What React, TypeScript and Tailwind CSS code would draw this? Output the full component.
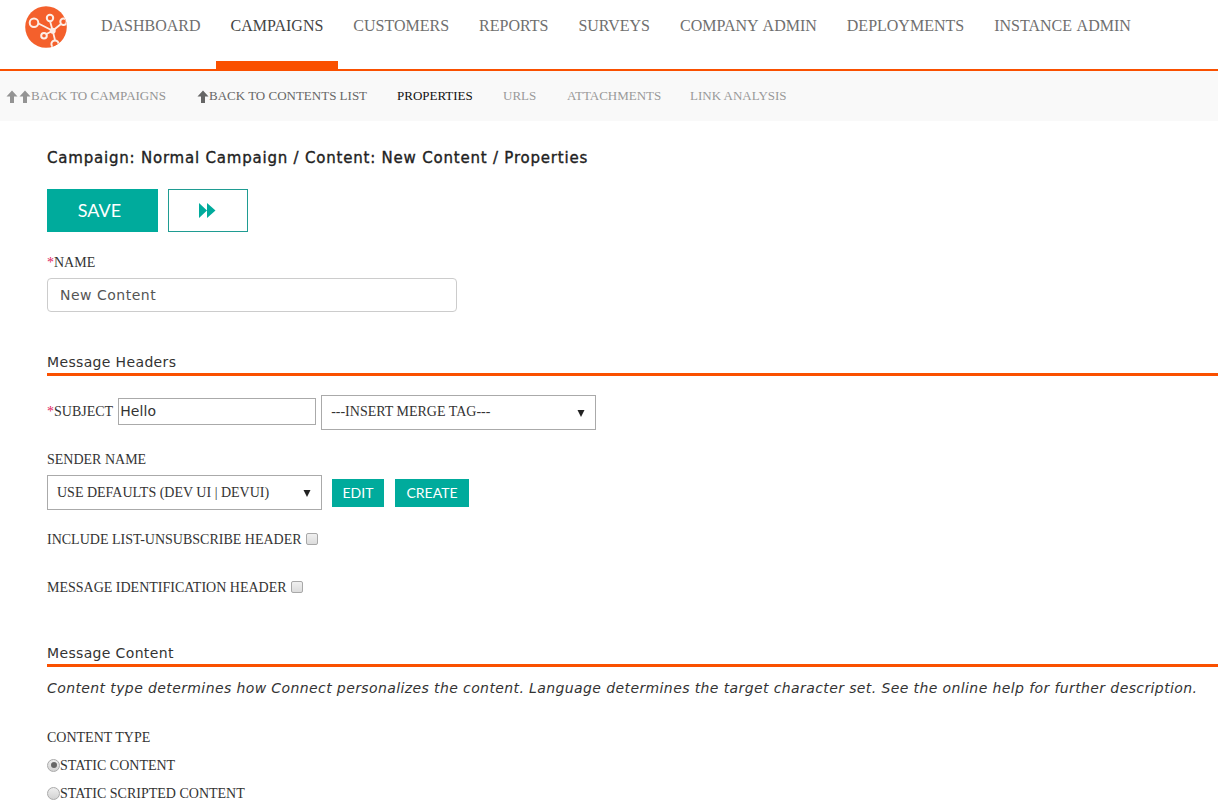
import React from "react";

const serif = "font-['Liberation_Serif',serif]";
const sans = "font-['DejaVu_Sans',sans-serif]";

function Logo() {
  return (
    <svg width="42" height="42" viewBox="0 0 42 42">
      <defs>
        <clipPath id="logo-clip"><circle cx="21" cy="21" r="20.8" /></clipPath>
      </defs>
      <circle cx="21" cy="21" r="20.8" fill="#f4602c" />
      <g clipPath="url(#logo-clip)" stroke="#fdeee6" strokeWidth="1.8" fill="none">
        <path d="M13.5 17.5 L27.7 24.7 M25 15 L27.7 24.7 M27.7 24.7 L36 18 M27.7 24.7 L21.5 28 M27.7 24.7 L30 34" />
        <circle cx="9" cy="16.7" r="4.3" fill="#f4602c" strokeWidth="2" />
        <circle cx="25" cy="12" r="3.2" fill="#f4602c" strokeWidth="2" />
        <circle cx="19" cy="29.7" r="2.8" fill="#f4602c" strokeWidth="2" />
        <circle cx="38.5" cy="15.7" r="3.2" fill="#f4602c" strokeWidth="2" />
        <circle cx="30" cy="38" r="3.6" fill="#f4602c" strokeWidth="2" />
      </g>
      <circle cx="27.7" cy="24.7" r="3" fill="#fdeee6" />
    </svg>
  );
}

function Up({ className = "" }: { className?: string }) {
  return (
    <svg width="12" height="13" viewBox="0 0 12 13" className={className} fill="currentColor">
      <path d="M6 0.5 L11.5 6.5 H8 V13 H4 V6.5 H0.5 Z" />
    </svg>
  );
}

function Heading({ children }: { children: React.ReactNode }) {
  return (
    <div className={`${sans} text-[14px] leading-[17px] tracking-[0.35px] text-[#333] border-b-[3px] border-[#fa5000] pb-[2px]`}>
      {children}
    </div>
  );
}

function FakeSelect({ text, w, extra = "" }: { text: string; w: string; extra?: string }) {
  return (
    <div className={`${w} h-[35px] border border-[#aaa] bg-white flex items-center justify-between pl-[9px] pr-[10px] text-[14px] text-[#333]`}>
      <span className={extra}>{text}</span>
      <svg width="8" height="8" viewBox="0 0 8 8" className="mt-[1px]" fill="#222"><path d="M0.5 1 H7.5 L4 8 Z" /></svg>
    </div>
  );
}

function Check() {
  return <span className="inline-block w-[12px] h-[12px] rounded-[2px] border border-[#a8a8a8] bg-gradient-to-b from-[#f0f0f0] to-[#dcdcdc] ml-[4px] mb-[4px] align-middle" />;
}

function Radio({ on }: { on?: boolean }) {
  return (
    <span className="w-[13px] h-[13px] -mt-[2px] rounded-full border border-[#aaa] bg-gradient-to-b from-[#eee] to-[#d2d2d2] flex items-center justify-center">
      {on && <span className="w-[6px] h-[6px] rounded-full bg-[#666]" />}
    </span>
  );
}

export default function App() {
  const nav = ["DASHBOARD", "CAMPAIGNS", "CUSTOMERS", "REPORTS", "SURVEYS", "COMPANY ADMIN", "DEPLOYMENTS", "INSTANCE ADMIN"];
  return (
    <div className={`${serif} w-[1218px] h-[801px] overflow-hidden bg-white text-[#333]`}>
      <header className="h-[71px] flex border-b-2 border-[#fa5000]">
        <div className="w-[86px] pl-[25px] pt-[6px] shrink-0"><Logo /></div>
        <nav className="flex [word-spacing:1.5px]">
          {nav.map((n) => (
            <div
              key={n}
              className={`px-[15px] pt-[16px] text-[16px] leading-[20px] ${n === "CAMPAIGNS" ? "text-[#444] border-b-[8px] border-[#fa5000] h-[69px] mb-[-2px] box-border" : "text-[#6f6f6f]"}`}
            >
              {n}
            </div>
          ))}
        </nav>
      </header>

      <div className="h-[50px] bg-[#f9f9f9] flex items-center text-[13px] pl-[6px]">
        <span className="flex items-center text-[#949494] w-[191px]"><Up /><Up className="ml-[1px]" />BACK TO CAMPAIGNS</span>
        <span className="flex items-center text-[#666] w-[200px]"><Up />BACK TO CONTENTS LIST</span>
        <span className="text-[#111] w-[106px]">PROPERTIES</span>
        <span className="text-[#999] w-[64px]">URLS</span>
        <span className="text-[#999] w-[123px]">ATTACHMENTS</span>
        <span className="text-[#999]">LINK ANALYSIS</span>
      </div>

      <main className="pl-[47px] pt-[28px]">
        <h1 className={`${sans} font-normal text-[15px] leading-[18px] text-[#222] tracking-[0.79px] [-webkit-text-stroke:0.35px_#222]`}>Campaign: Normal Campaign / Content: New Content / Properties</h1>

        <div className="flex gap-[10px] mt-[22px]">
          <div className={`font-['Lato',sans-serif] w-[111px] h-[43px] bg-[#00ab9c] text-white text-[18px] flex items-center justify-center pr-[6px]`}>SAVE</div>
          <div className="w-[80px] h-[43px] border border-[#1f9c92] flex items-center justify-center pr-[2px]">
            <svg width="17" height="15" viewBox="0 0 17 15" fill="#00ab9c"><path d="M0 0 L8 7.5 L0 15 Z M8 0 L16.5 7.5 L8 15 Z" /></svg>
          </div>
        </div>

        <div className="mt-[22px] text-[14px] leading-[18px]"><span className="text-[#e0245e]">*</span>NAME</div>
        <div className={`${sans} mt-[6px] w-[410px] h-[34px] border border-[#ccc] rounded-[4px] flex items-center pl-[12px] text-[14px] tracking-[0.5px] text-[#555]`}>New Content</div>

        <div className="mt-[42px]"><Heading>Message Headers</Heading></div>

        <div className="flex items-center mt-[19px] text-[14px]">
          <span className="mb-[2px]"><span className="text-[#e0245e]">*</span>SUBJECT</span>
          <div className={`${sans} ml-[5px] w-[198px] h-[27px] mb-[3px] border border-[#aaa] flex items-center pl-[1px] text-[14px] tracking-[0.1px] text-[#333]`}>Hello</div>
          <div className="ml-[5px]"><FakeSelect text="---INSERT MERGE TAG---" w="w-[275px]" extra="mb-[2px]" /></div>
        </div>

        <div className="mt-[21px] text-[14px] leading-[18px]">SENDER NAME</div>
        <div className="flex items-center mt-[6px]">
          <FakeSelect text="USE DEFAULTS (DEV UI | DEVUI)" w="w-[275px]" />
          <div className="ml-[10px] w-[52px] h-[28px] bg-[#00ab9c] text-white text-[14px] font-['Lato',sans-serif] flex items-center justify-center">EDIT</div>
          <div className="ml-[11px] w-[74px] h-[28px] bg-[#00ab9c] text-white text-[14px] font-['Lato',sans-serif] flex items-center justify-center">CREATE</div>
        </div>

        <div className="mt-[20px] text-[14px] leading-[20px]">INCLUDE LIST-UNSUBSCRIBE HEADER<Check /></div>
        <div className="mt-[28px] text-[14px] leading-[20px]">MESSAGE IDENTIFICATION HEADER<Check /></div>

        <div className="mt-[47px]"><Heading>Message Content</Heading></div>
        <p className={`${sans} italic text-[14px] leading-[18px] mt-[12px] tracking-[0.395px] whitespace-nowrap`}>Content type determines how Connect personalizes the content. Language determines the target character set. See the online help for further description.</p>

        <div className="mt-[32px] text-[14px] leading-[18px]">CONTENT TYPE</div>
        <div className="mt-[10px] flex items-center text-[14px] leading-[18px]"><Radio on />STATIC CONTENT</div>
        <div className="mt-[10px] flex items-center text-[14px] leading-[18px]"><Radio />STATIC SCRIPTED CONTENT</div>
      </main>
    </div>
  );
}
